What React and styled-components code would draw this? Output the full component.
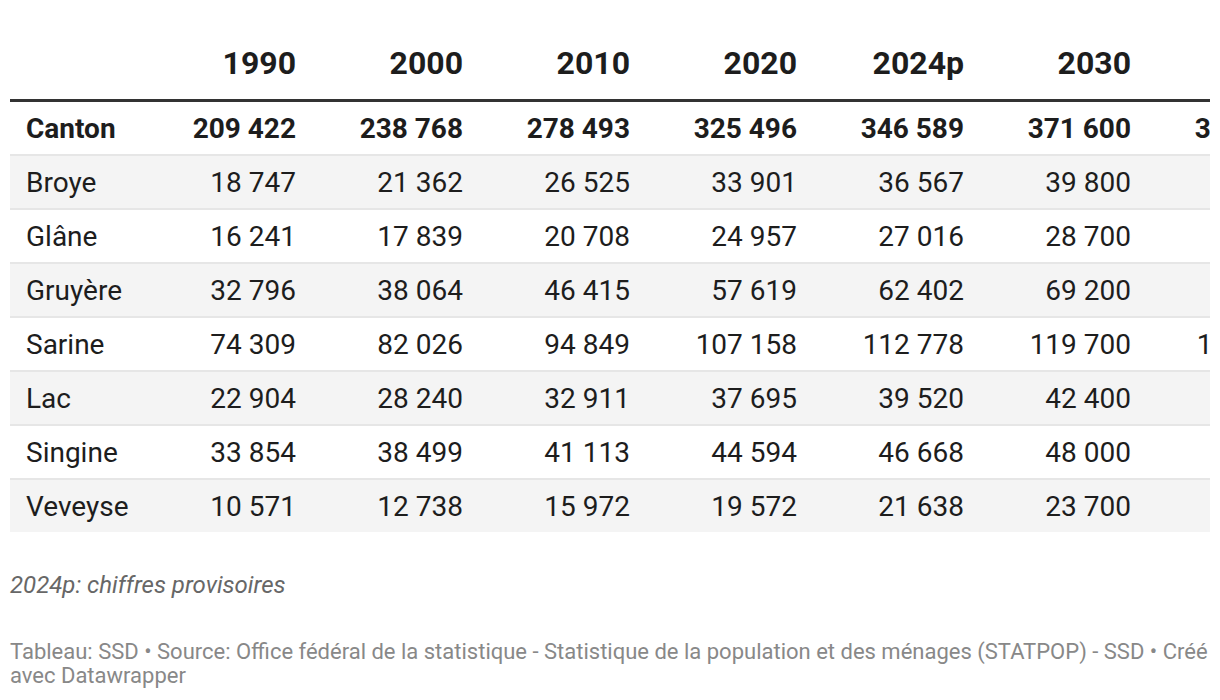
import React from "react";
import styled, { createGlobalStyle } from "styled-components";

const Global = createGlobalStyle`
  html, body { margin: 0; padding: 0; background: #fff; }
  body { font-family: Roboto, "Liberation Sans", sans-serif; color: #1d1d1d; }
`;

const Page = styled.div`
  padding: 36px 10px 0;
  width: 1200px;
`;

const Scroller = styled.div`
  width: 1200px;
  overflow: hidden;
`;

const Table = styled.table`
  border-collapse: collapse;
  table-layout: fixed;
  width: 1304px;
`;

const LabelCol = styled.col`
  width: 135px;
`;

const NumCol = styled.col`
  width: 167px;
`;

const HeadCell = styled.th`
  font-size: 32px;
  font-weight: 700;
  line-height: 40px;
  color: #1d1d1d;
  text-align: ${(p) => (p.$left ? "left" : "right")};
  padding: 7px 16px 16px;
  border-bottom: 3px solid #333;
  white-space: nowrap;
`;

const Row = styled.tr`
  background: ${(p) => (p.$shaded ? "#f4f4f4" : "#fff")};
  border-bottom: ${(p) => (p.$last ? "none" : "2px solid #e6e6e6")};
`;

const Cell = styled.td`
  height: 51px;
  padding: 1px 16px 0;
  font-size: 28px;
  line-height: 32px;
  font-weight: ${(p) => (p.$bold ? 700 : 400)};
  text-align: ${(p) => (p.$left ? "left" : "right")};
  white-space: nowrap;
  vertical-align: middle;
  color: #1d1d1d;
`;

const Notes = styled.p`
  margin: 38px 0 0;
  font-size: 24px;
  line-height: 31px;
  font-style: italic;
  color: #676767;
`;

const Footer = styled.p`
  margin: 39px 0 0;
  font-size: 22px;
  line-height: 24px;
  color: #888;
`;

const years = ["1990", "2000", "2010", "2020", "2024p", "2030", "2040"];

const rows = [
  ["Canton", "209 422", "238 768", "278 493", "325 496", "346 589", "371 600", "398 300"],
  ["Broye", "18 747", "21 362", "26 525", "33 901", "36 567", "39 800", "45 100"],
  ["Glâne", "16 241", "17 839", "20 708", "24 957", "27 016", "28 700", "32 100"],
  ["Gruyère", "32 796", "38 064", "46 415", "57 619", "62 402", "69 200", "79 600"],
  ["Sarine", "74 309", "82 026", "94 849", "107 158", "112 778", "119 700", "131 200"],
  ["Lac", "22 904", "28 240", "32 911", "37 695", "39 520", "42 400", "47 200"],
  ["Singine", "33 854", "38 499", "41 113", "44 594", "46 668", "48 000", "50 900"],
  ["Veveyse", "10 571", "12 738", "15 972", "19 572", "21 638", "23 700", "26 900"],
];

const nb = (s) => s.replace(/ /g, "\u00A0");

export default function App() {
  return (
    <Page>
      <Global />
      <Scroller>
        <Table>
          <colgroup>
            <LabelCol />
            {years.map((y) => (
              <NumCol key={y} />
            ))}
          </colgroup>
          <thead>
            <tr>
              <HeadCell $left />
              {years.map((y) => (
                <HeadCell key={y}>{y}</HeadCell>
              ))}
            </tr>
          </thead>
          <tbody>
            {rows.map((r, i) => (
              <Row key={r[0]} $shaded={i % 2 === 1} $last={i === rows.length - 1}>
                {r.map((v, j) => (
                  <Cell key={j} $left={j === 0} $bold={i === 0}>
                    {nb(v)}
                  </Cell>
                ))}
              </Row>
            ))}
          </tbody>
        </Table>
      </Scroller>
      <Notes>2024p: chiffres provisoires</Notes>
      <Footer>
        Tableau: SSD • Source: Office fédéral de la statistique - Statistique de la population et des ménages (STATPOP) - SSD • Créé avec Datawrapper
      </Footer>
    </Page>
  );
}
